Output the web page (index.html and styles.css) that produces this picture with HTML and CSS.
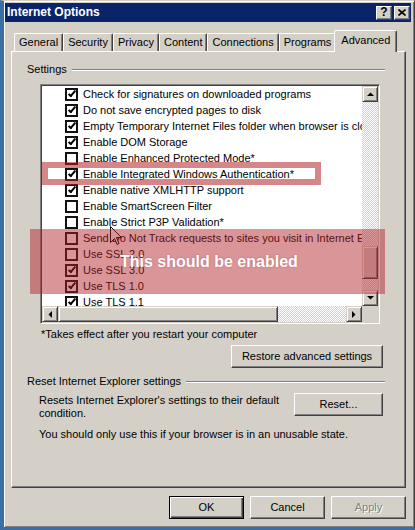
FILE: index.html
```html
<!DOCTYPE html>
<html>
<head>
  <title>Internet Options</title>
  <link rel="stylesheet" href="styles.css">
</head>
<body>
  <div class="window">
    <div class="titlebar">
      <span class="title">Internet Options</span>
      <span class="tbtn">?</span>
      <span class="tbtn">
        <svg width="8" height="7" viewBox="0 0 8 7"><path d="M0.5 0.5L7.5 6.5M7.5 0.5L0.5 6.5" stroke="#000" stroke-width="1.6"/></svg>
      </span>
    </div>

    <!-- Pestañas -->
    <div class="tabs">
      <div class="tab">General</div>
      <div class="tab">Security</div>
      <div class="tab">Privacy</div>
      <div class="tab">Content</div>
      <div class="tab">Connections</div>
      <div class="tab">Programs</div>
      <div class="tab active">Advanced</div>
    </div>

    <div class="panel">
      <div class="group-head"><span>Settings</span><span class="rule"></span></div>

      <div class="tree">
        <div class="list">
          <div class="row"><span class="cb on"></span>Check for signatures on downloaded programs</div>
          <div class="row"><span class="cb on"></span>Do not save encrypted pages to disk</div>
          <div class="row"><span class="cb on"></span>Empty Temporary Internet Files folder when browser is closed</div>
          <div class="row"><span class="cb on"></span>Enable DOM Storage</div>
          <div class="row"><span class="cb"></span>Enable Enhanced Protected Mode*</div>
          <div class="row"><span class="cb on"></span>Enable Integrated Windows Authentication*</div>
          <div class="row"><span class="cb on"></span>Enable native XMLHTTP support</div>
          <div class="row"><span class="cb"></span>Enable SmartScreen Filter</div>
          <div class="row"><span class="cb"></span>Enable Strict P3P Validation*</div>
          <div class="row"><span class="cb"></span>Send Do Not Track requests to sites you visit in Internet Explorer*</div>
          <div class="row"><span class="cb"></span>Use SSL 2.0</div>
          <div class="row"><span class="cb on"></span>Use SSL 3.0</div>
          <div class="row"><span class="cb on"></span>Use TLS 1.0</div>
          <div class="row"><span class="cb on"></span>Use TLS 1.1</div>
        </div>
        <div class="vscroll">
          <span class="sbtn"><svg width="7" height="4" viewBox="0 0 7 4"><path d="M0 4H7L3.5 0.5Z"/></svg></span>
          <span class="thumb v"></span>
          <span class="sbtn end"><svg width="7" height="4" viewBox="0 0 7 4"><path d="M0 0H7L3.5 3.5Z"/></svg></span>
        </div>
        <div class="hscroll">
          <span class="sbtn"><svg width="4" height="7" viewBox="0 0 4 7"><path d="M4 0V7L0.5 3.5Z"/></svg></span>
          <span class="thumb h"></span>
          <span class="sbtn end"><svg width="4" height="7" viewBox="0 0 4 7"><path d="M0 0V7L3.5 3.5Z"/></svg></span>
        </div>
        <div class="corner"></div>
      </div>

      <div class="note">*Takes effect after you restart your computer</div>
      <button class="btn restore">Restore advanced settings</button>

      <div class="group-head reset-head"><span>Reset Internet Explorer settings</span><span class="rule"></span></div>
      <div class="reset-row">
        <div class="reset-text">Resets Internet Explorer's settings to their default condition.</div>
        <button class="btn reset">Reset...</button>
      </div>
      <div class="warn">You should only use this if your browser is in an unusable state.</div>
    </div>

    <div class="actions">
      <button class="btn default">OK</button>
      <button class="btn">Cancel</button>
      <button class="btn" disabled>Apply</button>
    </div>
  </div>

  <!-- Anotaciones sobre la captura -->
  <svg class="cursor" width="12" height="19" viewBox="0 0 12 19"><path d="M0.5 0.5V16.5L4.5 12.5L7 18.5L9 17.5L6.5 11.5H11.5Z" fill="#fff" stroke="#000"/></svg>
  <div class="mark"></div>
  <div class="banner">This should be enabled</div>
</body>
</html>
```

FILE: styles.css
```css
body {
  margin: 0;
  background-color: #3a6ea5;
  font: 11px/13px "Liberation Sans", Arial, sans-serif;
  color: #000;
}

.window {
  width: 415px;
  height: 530px;
  box-sizing: border-box;
  background-color: #d4d0c8;
  border-left: 4px solid #3a6ea5;
  border-bottom: 3px solid #3a6ea5;
  border-right: 1px solid #404040;
  border-top: 1px solid #d4d0c8;
  padding: 2px 3px 1px 1px;
  box-shadow: inset 1px 1px 0 #fff, inset -1px -1px 0 #808080;
  display: flex;
  flex-direction: column;
}

.titlebar {
  height: 19px;
  flex: none;
  display: flex;
  align-items: center;
  padding: 0 1px 0 2px;
  background-color: #0a246a;
  color: #fff;
}

.title {
  flex: 1;
  font-weight: bold;
  font-size: 12px;
}

.tbtn {
  width: 16px;
  height: 14px;
  box-sizing: border-box;
  display: flex;
  align-items: center;
  justify-content: center;
  background-color: #d4d0c8;
  color: #000;
  font-weight: bold;
  font-size: 12px;
  border: 1px solid;
  border-color: #fff #404040 #404040 #fff;
  box-shadow: inset -1px -1px 0 #808080;
}

.tbtn + .tbtn {
  margin-left: 2px;
}

/* pestañas */
.tabs {
  display: flex;
  align-items: flex-end;
  height: 22px;
  margin: 8px 0 -1px 9px;
  position: relative;
  z-index: 1;
}

.tab {
  height: 18px;
  margin-bottom: 1px;
  padding: 0 4px;
  box-sizing: border-box;
  display: flex;
  align-items: center;
  background-color: #d4d0c8;
  border: 1px solid;
  border-bottom: 0;
  border-color: #fff #404040 #404040 #fff;
  box-shadow: inset -1px 0 0 #808080;
  border-radius: 2px 2px 0 0;
}

.tab.active {
  height: 22px;
  margin: 0 -2px;
  padding: 0 6px 3px;
}

.panel {
  flex: none;
  height: 437px;
  margin: 0 5px 0 6px;
  box-sizing: border-box;
  border: 1px solid;
  border-color: #fff #404040 #404040 #fff;
  box-shadow: inset -1px -1px 0 #808080;
  padding: 11px 20px 0 15px;
  display: flex;
  flex-direction: column;
}

.group-head {
  display: flex;
  align-items: center;
  gap: 5px;
  height: 13px;
}

.rule {
  flex: 1;
  border-top: 1px solid #808080;
  border-bottom: 1px solid #fff;
}

/* lista de opciones */
.tree {
  width: 340px;
  height: 240px;
  box-sizing: border-box;
  margin: 8px 0 0 13px;
  padding: 1px;
  border: 1px solid;
  border-color: #808080 #fff #fff #808080;
  box-shadow: inset 1px 1px 0 #404040, inset -1px -1px 0 #d4d0c8;
  display: grid;
  grid-template-columns: 1fr 16px;
  grid-template-rows: 1fr 16px;
}

.list {
  overflow: hidden;
  padding-left: 23px;
  background-color: #fff;
}

.row {
  height: 16px;
  display: flex;
  align-items: center;
  gap: 5px;
  white-space: nowrap;
}

.cb {
  flex: none;
  width: 13px;
  height: 13px;
  box-sizing: border-box;
  border: 2px solid #111;
  background-color: #fff;
  display: flex;
  align-items: center;
  justify-content: center;
}

.cb.on::after {
  content: "";
  width: 2px;
  height: 6px;
  border: solid #000;
  border-width: 0 2px 2px 0;
  transform: translateY(-1px) rotate(40deg);
}

.vscroll,
.hscroll {
  display: flex;
  background: repeating-conic-gradient(#d4d0c8 0 25%, #fff 0 50%) 0 0 / 2px 2px;
}

.vscroll {
  flex-direction: column;
}

.sbtn,
.thumb {
  box-sizing: border-box;
  background-color: #d4d0c8;
  border: 1px solid;
  border-color: #d4d0c8 #404040 #404040 #d4d0c8;
  box-shadow: inset 1px 1px 0 #fff, inset -1px -1px 0 #808080;
}

.sbtn {
  width: 16px;
  height: 16px;
  flex: none;
  display: flex;
  align-items: center;
  justify-content: center;
}

.sbtn.end {
  margin: auto 0 0 0;
}

.hscroll .sbtn.end {
  margin: 0 0 0 auto;
}

.thumb.v {
  height: 33px;
  margin-top: 144px;
}

.thumb.h {
  width: 220px;
}

.corner {
  background-color: #d4d0c8;
}

.note {
  margin: 4px 0 0 14px;
}

.btn {
  width: 75px;
  height: 23px;
  box-sizing: border-box;
  padding: 0;
  font: inherit;
  color: #000;
  background-color: #d4d0c8;
  border: 1px solid;
  border-color: #fff #404040 #404040 #fff;
  box-shadow: inset -1px -1px 0 #808080;
}

.btn.default {
  border-color: #000;
  box-shadow: inset 1px 1px 0 #fff, inset -1px -1px 0 #404040, inset -2px -2px 0 #808080;
}

.btn:disabled {
  color: #808080;
  text-shadow: 1px 1px 0 #fff;
}

.restore {
  width: 152px;
  align-self: flex-end;
  margin: 4px 2px 0 0;
}

.reset-head {
  margin-top: 7px;
}

.reset-row {
  display: flex;
  justify-content: space-between;
  margin: 5px 2px 0 12px;
}

.reset-text {
  width: 250px;
  margin-top: 1px;
}

.reset {
  width: 89px;
}

.warn {
  margin: 8px 0 0 12px;
}

.actions {
  display: flex;
  justify-content: flex-end;
  gap: 6px;
  margin: 8px 5px 0 0;
}

/* anotaciones */
.cursor {
  position: absolute;
  left: 110px;
  top: 226px;
}

.mark {
  position: absolute;
  left: 42px;
  top: 162px;
  width: 279px;
  height: 23px;
  box-sizing: border-box;
  border: 6px solid rgba(178, 34, 40, 0.55);
}

.banner {
  position: absolute;
  left: 30px;
  top: 229px;
  width: 355px;
  height: 65px;
  box-sizing: border-box;
  padding-left: 90px;
  display: flex;
  align-items: center;
  background-color: rgba(178, 34, 40, 0.48);
  color: #fff;
  font: bold 16px "Liberation Sans", Arial, sans-serif;
  text-shadow: 0 0 2px rgba(120, 20, 20, 0.35);
}
```
